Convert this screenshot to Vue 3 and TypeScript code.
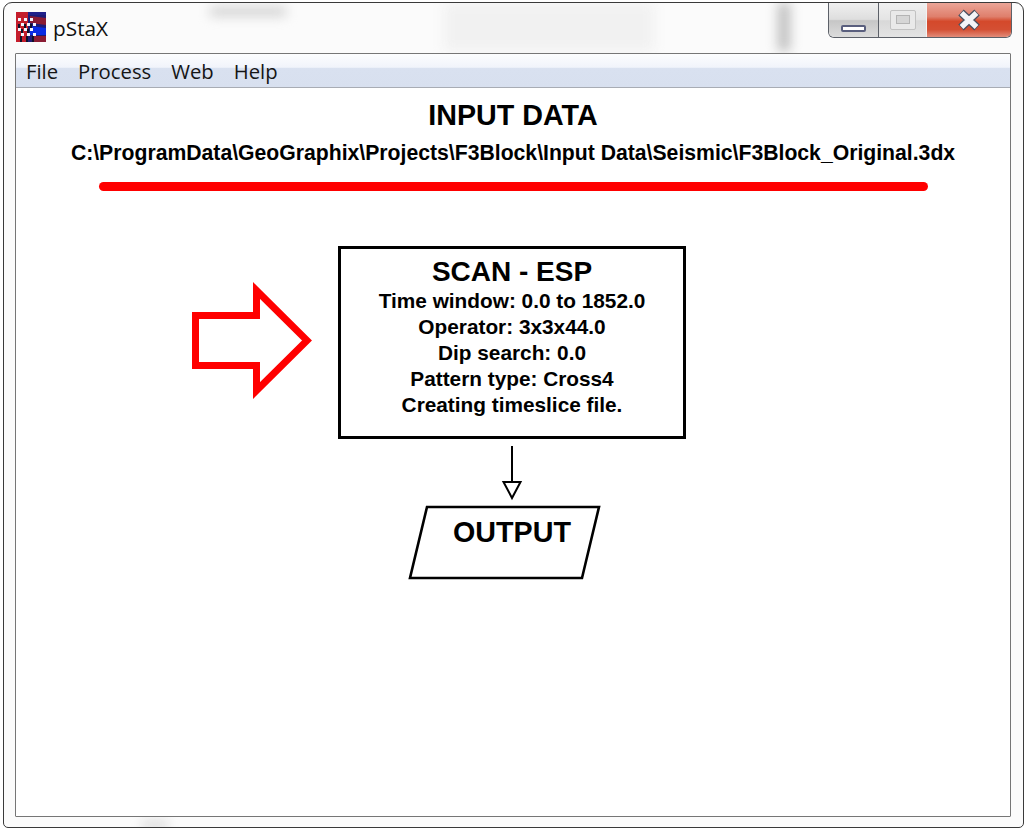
<template>
  <div class="window">
    <div class="backdrop">
      <span class="smear smear_a"></span>
      <span class="smear smear_b"></span>
      <span class="smear smear_c"></span>
      <span class="smear smear_d"></span>
    </div>
    <div class="titlebar">
      <svg class="app_icon" width="30" height="30" viewBox="0 0 30 30">
        <rect width="30" height="30" fill="#1c1c78" />
        <rect x="0" y="0" width="12" height="30" fill="#c41e2c" />
        <path d="M12 0h18v3H12z" fill="#20208a" />
        <path d="M14 4l16 2v7l-16-2zM18 24h12v6H18z" fill="#8a1c34" />
        <path d="M14 14l16 2v7H14z" fill="#0a2ce4" />
        <g fill="#f4f4ff">
          <rect v-for="dot in iconDots" :key="dot.x + '-' + dot.y" :x="dot.x" :y="dot.y" width="3" height="3" />
        </g>
        <path d="M2 12h2v4H2zM8 12h2v4H8zM14 12h2v4h-2zM5 17h2v4H5zM11 17h2v4h-2zM4 24h2v6H4zM10 24h2v6h-2zM16 24h2v6h-2z" fill="#101028" />
      </svg>
      <span class="app_title">pStaX</span>
      <div class="controls">
        <button class="ctrl ctrl_min"><span class="min_glyph"></span></button>
        <button class="ctrl ctrl_max"><span class="max_glyph"></span></button>
        <button class="ctrl ctrl_close">
          <svg width="26" height="22" viewBox="0 0 26 22">
            <path d="M5 3.5L21 18.5M21 3.5L5 18.5" fill="none" stroke="#4a5060" stroke-width="8" />
            <path d="M5.5 4L20.5 18M20.5 4L5.5 18" fill="none" stroke="#f4f5f8" stroke-width="5.4" />
          </svg>
        </button>
      </div>
    </div>
    <div class="client">
      <nav class="menubar">
        <span v-for="item in menuItems" :key="item" class="menu_item">{{ item }}</span>
      </nav>
      <main class="content">
        <h1 class="heading">INPUT DATA</h1>
        <p class="path">{{ inputPath }}</p>
        <div class="rule"></div>
        <div class="flow">
          <svg class="big_arrow" width="122" height="122" viewBox="0 0 122 122">
            <path d="M3.5 36.5H64.5V11.5L115 61.5 64.5 111.5V86.5H3.5Z" fill="#fff" stroke="#f00" stroke-width="7" />
          </svg>
          <section class="scan_box">
            <h2 class="scan_title">SCAN - ESP</h2>
            <p v-for="line in scanLines" :key="line" class="scan_line">{{ line }}</p>
          </section>
          <svg class="down_arrow" width="24" height="56" viewBox="0 0 24 56">
            <path d="M12 0V36" stroke="#000" stroke-width="2" fill="none" />
            <path d="M3.5 36H20.5L12 52Z" fill="#fff" stroke="#000" stroke-width="2" />
          </svg>
          <svg class="output_shape" width="194" height="76" viewBox="0 0 194 76">
            <path d="M19 2H191L174 73H2Z" fill="#fff" stroke="#000" stroke-width="2.6" />
          </svg>
          <span class="output_label">OUTPUT</span>
        </div>
      </main>
    </div>
  </div>
</template>

<script setup lang="ts">
const menuItems = ["File", "Process", "Web", "Help"]

const inputPath = "C:\\ProgramData\\GeoGraphix\\Projects\\F3Block\\Input Data\\Seismic\\F3Block_Original.3dx"

const scanLines = [
  "Time window: 0.0 to 1852.0",
  "Operator: 3x3x44.0",
  "Dip search: 0.0",
  "Pattern type: Cross4",
  "Creating timeslice file.",
]

// staggered white dots of the seismic logo
const iconDots: { x: number; y: number }[] = []
for (let row = 0; row < 4; row++) {
  for (let col = 0; col < 3; col++) {
    iconDots.push({ x: 2 + col * 6 + (row % 2) * 3, y: 6 + row * 5 })
  }
}
</script>

<style scoped>
.window {
  position: relative;
  box-sizing: border-box;
  width: 1021px;
  height: 826px;
  margin: 2px 0 0 3px;
  padding: 0 12px 10px 11px;
  display: flex;
  flex-direction: column;
  background: #fbfbfb;
  border: 1px solid #3a3a3a;
  border-radius: 9px 9px 5px 5px;
  overflow: hidden;
  font-family: "Liberation Sans", Arial, sans-serif;
}

.backdrop {
  position: absolute;
  inset: 0;
}

.smear {
  position: absolute;
  filter: blur(6px);
}

.smear_a {
  left: 206px;
  top: 4px;
  width: 76px;
  height: 9px;
  background: #cfcfcf;
}

.smear_b {
  left: 440px;
  top: 0;
  width: 210px;
  height: 48px;
  background: #f1f1f1;
}

.smear_c {
  left: 774px;
  top: 0;
  width: 12px;
  height: 48px;
  background: #bdbdbd;
}

.smear_d {
  left: 138px;
  top: 818px;
  width: 26px;
  height: 8px;
  background: #d6d6d6;
}

.titlebar {
  position: relative;
  box-sizing: border-box;
  height: 50px;
  padding-bottom: 2px;
  flex: none;
  display: flex;
  align-items: center;
}

.app_icon {
  margin: 0 7px 0 1px;
  flex: none;
}

.app_title {
  font-family: "Open Sans", sans-serif;
  font-size: 20.8px;
  color: #111;
  margin-top: 1px;
}

.controls {
  position: absolute;
  top: 0;
  right: -1px;
  display: flex;
  height: 34px;
  border: 1px solid #5c6068;
  border-top: none;
  border-radius: 0 0 6px 6px;
  overflow: hidden;
}

.ctrl {
  padding: 0;
  margin: 0;
  border: none;
  display: flex;
  align-items: center;
  justify-content: center;
  background: linear-gradient(#f0f0f0 0, #dedede 48%, #c6c6c6 52%, #dcdcdc 100%);
}

.ctrl_min {
  width: 50px;
  border-right: 1px solid #5c6068;
  align-items: flex-end;
  padding-bottom: 5px;
}

.min_glyph {
  width: 25px;
  height: 7px;
  box-sizing: border-box;
  background: #fff;
  border: 2px solid #5a5f7e;
  border-radius: 2px;
}

.ctrl_max {
  width: 48px;
  border-right: 1px solid #f2f2f2;
  background: linear-gradient(#f0f0f0, #e4e4e4 50%, #d8d8d8 52%, #e4e4e4);
}

.max_glyph {
  width: 26px;
  height: 20px;
  box-sizing: border-box;
  border: 1px solid #c2c2c2;
  border-radius: 2px;
  background: #e9e9e9;
  position: relative;
}

.max_glyph::after {
  content: "";
  position: absolute;
  left: 5px;
  right: 5px;
  top: 4px;
  bottom: 5px;
  border: 1px solid #b4b4b4;
  background: #d6d6d6;
}

.ctrl_close {
  width: 84px;
  background: linear-gradient(#eba597 0, #df7f6c 40%, #d4492b 54%, #d44f33 78%, #e28c7a 100%);
}

.client {
  position: relative;
  flex: 1;
  min-height: 0;
  display: flex;
  flex-direction: column;
  background: #fff;
  border: 1px solid #767676;
  border-radius: 1px;
}

.menubar {
  height: 34px;
  flex: none;
  box-sizing: border-box;
  display: flex;
  align-items: center;
  gap: 20px;
  padding: 0 0 0 10px;
  border-bottom: 1px solid #a8acb4;
  background: linear-gradient(#fcfdfe 0, #f1f4fb 40%, #d9e1f0 44%, #d8e0ef 100%);
}

.menu_item {
  font-family: "Open Sans", sans-serif;
  font-size: 20.3px;
  color: #151515;
}

.content {
  flex: 1;
  display: flex;
  flex-direction: column;
  align-items: center;
  color: #000;
  font-weight: 700;
}

.heading {
  margin: 9px 0 0 0;
  font-size: 28.7px;
  line-height: 36px;
  font-weight: 700;
}

.path {
  margin: 7px 0 0 0;
  font-size: 21.2px;
  line-height: 26px;
}

.rule {
  width: 829px;
  height: 9px;
  margin-top: 16px;
  background: #f00;
  border-radius: 5px;
}

.flow {
  position: relative;
  flex: 1;
  align-self: stretch;
}

.big_arrow {
  position: absolute;
  left: 176px;
  top: 88px;
}

.scan_box {
  position: absolute;
  left: 322px;
  top: 55px;
  box-sizing: border-box;
  width: 348px;
  height: 193px;
  border: 3px solid #000;
  display: flex;
  flex-direction: column;
  align-items: center;
}

.scan_title {
  margin: 7px 0 0 0;
  font-size: 28px;
  line-height: 32px;
  font-weight: 700;
}

.scan_line {
  margin: 0;
  font-size: 20.8px;
  line-height: 26px;
}

.down_arrow {
  position: absolute;
  left: 484px;
  top: 255px;
}

.output_shape {
  position: absolute;
  left: 392px;
  top: 314px;
}

.output_label {
  position: absolute;
  left: 437px;
  top: 324px;
  font-size: 28.7px;
  line-height: 34px;
}
</style>

<style>
html,
body {
  margin: 0;
  background: #fff;
}
</style>
